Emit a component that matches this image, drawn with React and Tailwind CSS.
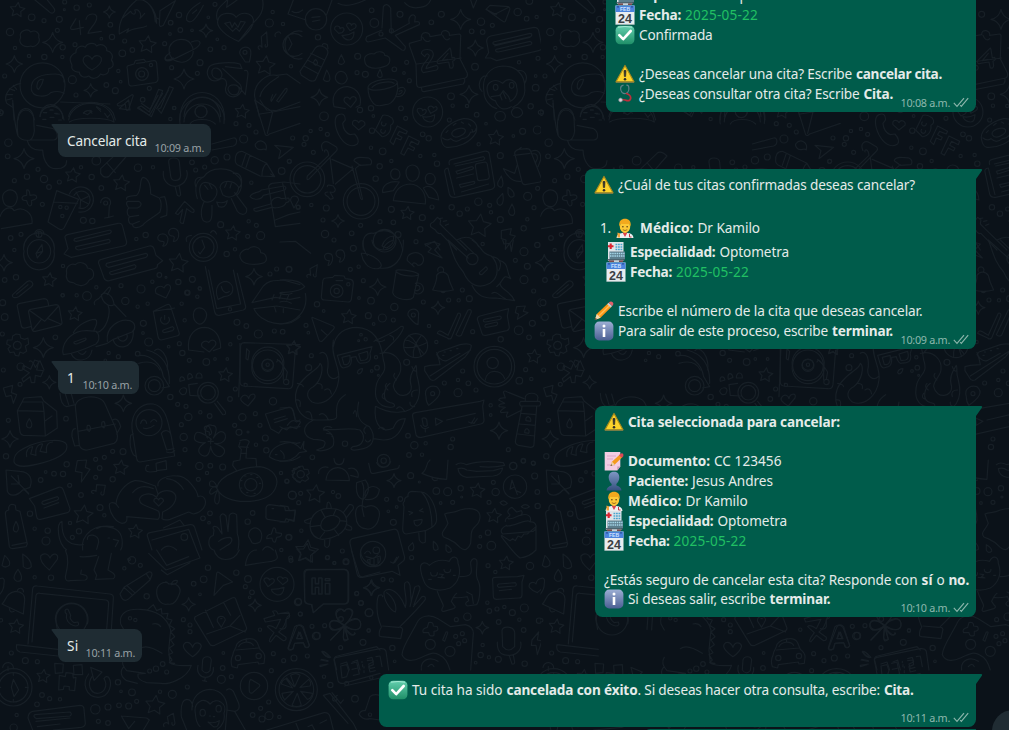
import React, { useLayoutEffect, useRef } from "react";

/* ---------- wallpaper ---------- */

const starPath = (x, y, r) => {
  let d = "";
  for (let i = 0; i < 10; i++) {
    const a = (Math.PI / 5) * i - Math.PI / 2 + 0.12;
    const k = i % 2 ? r * 0.5 : r;
    d += `${i ? "L" : "M"}${(x + k * Math.cos(a)).toFixed(1)} ${(y + k * Math.sin(a)).toFixed(1)}`;
  }
  return d + "Z";
};
const sparkPath = (x, y, r) => {
  const q = r * 0.18;
  return `M${x} ${y - r}Q${x + q} ${y - q} ${x + r} ${y}Q${x + q} ${y + q} ${x} ${y + r}Q${x - q} ${y + q} ${x - r} ${y}Q${x - q} ${y - q} ${x} ${y - r}Z`;
};

// Each group is drawn at three times its size, from its own origin.
const DOODLES = [
  {
    at: [0, 0],
    stars: [[52, 30, 23], [442, 134, 27], [796, 197, 30]],
    sparks: [[158, 127, 30], [43, 192, 25], [328, 36, 18], [618, 92, 20], [552, 237, 30], [272, 271, 20]],
    dots: [[95, 52, 10], [132, 62, 6], [178, 58, 9], [172, 91, 6], [230, 23, 8], [268, 15, 6], [194, 6, 6], [193, 29, 3], [30, 96, 11], [45, 144, 5], [87, 168, 5], [133, 171, 8], [188, 142, 8], [187, 171, 5], [225, 134, 6], [304, 116, 4], [336, 111, 8], [331, 74, 7], [374, 123, 6], [397, 150, 7], [367, 160, 10], [494, 131, 6], [510, 102, 4], [512, 68, 7], [537, 45, 8], [541, 90, 7], [576, 91, 4], [625, 52, 4], [652, 118, 4], [645, 13, 6], [631, 148, 7], [672, 143, 6], [600, 188, 9], [592, 220, 6], [515, 203, 6], [355, 213, 5], [217, 239, 12], [228, 285, 6], [319, 255, 7], [346, 272, 9], [362, 245, 4], [448, 265, 6], [428, 299, 7], [14, 228, 6], [0, 338, 9], [522, 324, 5], [808, 69, 12], [818, 36, 5], [849, 72, 5], [873, 199, 5], [735, 157, 6], [425, 222, 9], [603, 335, 18]],
    paths: [
      "M62 112C54 92 84 84 92 96C106 88 120 98 116 112C124 128 104 144 92 138C78 144 52 134 62 112Z",
      "M105 0L146 34C158 46 170 34 160 22L142 0",
      "M212 82L228 56M212 82Q210 90 222 88L250 82M238 62L242 104M258 58C262 38 294 36 290 56C286 76 268 84 264 100L304 94",
      "M212 186C206 170 220 160 228 158C226 142 244 134 256 142C262 128 284 126 290 138C306 128 322 140 320 152C334 154 342 168 334 180C344 192 340 204 326 206C328 222 312 228 302 222C292 238 274 238 266 228C252 236 238 228 238 216C222 218 212 206 216 196Z",
      "M276 210C256 200 244 184 252 172C260 162 272 168 276 178C282 164 298 164 304 174C308 190 290 202 276 210Z",
      "M382 206Q378 198 388 196L402 192L406 182L432 178L438 186L460 182Q468 180 470 190L474 236Q474 246 464 248L396 258Q386 258 386 248ZM410 190L434 187",
      "M426 203A19 19 0 1 1 425.900 203M453 190A5 5 0 1 1 452.900 190",
      "M358 102C354 66 376 28 410 0M358 102L386 86L380 98C400 80 420 88 440 78M410 0C440 -8 470 30 470 70M428 0C454 10 466 40 466 66M370 52L392 34C400 50 410 40 404 30C416 26 426 40 420 56L434 40",
      "M480 32L526 2L490 76Q478 84 478 72ZM470 54L478 58",
      "M560 60C556 38 580 20 600 8M560 60C572 74 586 62 610 16M578 40L590 30",
      "M508 142C520 112 566 108 578 142C586 172 560 190 540 186C516 184 504 164 508 142ZM510 158C484 176 494 190 520 178L582 148C610 130 604 116 574 126M500 166C490 180 500 184 520 174",
      "M652 60C640 20 680 10 684 -6M788 0C796 50 760 60 746 86L716 124C680 110 646 82 654 60C660 34 700 36 708 52C724 34 754 36 760 58C764 84 732 108 716 124M684 -6L680 22L700 8L722 -8",
      "M674 70L690 66L696 82L704 68L714 82L722 64L736 66L718 94L708 84L698 94Z",
      "M778 148C768 140 782 132 786 142L784 110L800 96L802 130C806 142 792 146 796 134",
      "M736 186L720 162C714 140 748 134 752 152Q754 164 748 186Z",
      "M906 110A34 34 0 1 0 906 160M906 94A42 42 0 1 0 906 176M826 110C820 98 838 92 842 100M866 112L876 132L866 150",
      "M60 256A67 67 0 1 0 195 256A67 67 0 1 0 60 256ZM94 268C90 230 130 222 166 222Q194 222 192 246M94 268C98 294 140 292 152 278Q176 270 192 280M112 250Q116 236 130 238Q128 252 116 268Q108 266 112 250Z",
      "M62 250C30 256 8 286 20 310L38 322M20 300L36 296M18 284L38 284M28 266L44 272M40 256L50 268",
      "M38 300L42 360M182 306L330 312M54 360C56 320 96 320 104 360",
      "M120 350C124 300 182 300 192 360M206 350C214 300 310 290 340 340L346 360M250 340C256 330 270 328 276 340M290 322L302 334",
      "M132 338h8M150 330h8M164 340h8",
      "M352 312L396 284Q402 284 398 292L386 328Q380 336 378 326L376 312L360 318Q350 318 352 312Z",
      "M414 322L424 318L448 336L476 268L488 272L454 350ZM474 328L482 324L508 260L520 264L484 340Z",
      "M540 360C536 250 676 250 674 360M552 350C556 272 658 272 662 350",
      "M628 200C640 186 700 186 720 192L726 206L676 200M628 200C612 226 632 250 656 240C672 230 680 240 680 254C668 280 690 296 710 288C730 276 728 256 712 246L668 206M734 212Q744 208 744 222L736 284L718 262M636 212C642 196 664 206 666 224C666 246 632 240 636 212ZM684 268C684 250 716 250 718 268C716 290 690 290 684 268Z",
      "M764 290C760 250 800 220 830 226L860 222L900 250M764 290L778 350M780 290C784 260 820 240 836 230M780 300L800 330L830 332L900 306M818 284Q810 300 814 304L828 282M830 302L856 266Q864 262 860 274L836 306Z",
    ],
  },
  {
    at: [0, 100],
    stars: [[726, 35, 22], [218, 226, 23], [364, 250, 25], [698, 400, 23], [535, 490, 30], [148, 540, 22]],
    sparks: [[72, 176, 30], [12, 488, 25], [762, 530, 25]],
    dots: [[603, 35, 18], [523, 24, 5], [511, 57, 5], [708, 71, 6], [747, 76, 6], [768, 96, 6], [731, 117, 12], [25, 128, 11], [23, 169, 7], [5, 37, 5], [81, 230, 8], [43, 242, 6], [132, 237, 11], [114, 208, 6], [178, 246, 6], [147, 261, 7], [127, 313, 6], [243, 202, 5], [275, 231, 8], [289, 182, 13], [304, 264, 7], [317, 309, 6], [250, 361, 9], [277, 363, 8], [414, 203, 11], [459, 202, 5], [576, 187, 7], [587, 210, 6], [614, 201, 6], [644, 181, 11], [681, 171, 9], [845, 213, 10], [868, 184, 6], [754, 248, 5], [894, 322, 6], [746, 364, 5], [769, 376, 6], [662, 374, 9], [782, 407, 12], [743, 409, 6], [705, 448, 5], [680, 462, 8], [437, 405, 8], [409, 417, 5], [32, 414, 7], [63, 403, 6], [43, 450, 5], [48, 532, 8], [14, 540, 7], [189, 498, 5], [188, 586, 5], [478, 525, 7], [498, 532, 3], [457, 545, 5], [535, 546, 8], [577, 538, 9], [867, 508, 8], [830, 507, 6], [810, 522, 6], [600, 566, 5], [562, 578, 6], [117, 403, 9], [181, 321, 5], [200, 323, 5], [187, 348, 5]],
    paths: [
      "M38 10C44 50 44 80 54 108Q66 124 90 120L160 120C176 120 176 96 160 86L110 76M54 108C48 60 54 30 74 26C100 24 102 50 102 76C106 100 98 116 90 120M82 122C88 150 110 152 128 150C130 190 150 208 170 206C190 206 200 196 200 182",
      "M120 50A34 34 0 1 1 188 56M206 60C210 30 240 10 270 10C310 10 336 30 342 66M208 66C230 50 320 52 342 66M130 38h10M150 30h10M168 42h10M128 58h10M150 52h12M176 60h8",
      "M250 38Q268 26 276 34L262 44ZM290 20l12 8M314 40l10 14M330 44l-8 8",
      "M540 72A67 67 0 1 1 672 70M552 66A54 54 0 1 1 660 66M570 72C580 54 630 54 646 72",
      "M412 24L448 46L488 -20M424 10L450 28L474 -14M470 26L506 -30M358 26L386 0L390 30Z",
      "M636 132L700 114C714 112 712 134 700 138L636 150",
      "M764 0L796 104Q800 110 808 102L900 70M780 42L818 36L900 20M764 0L818 36L802 100",
      "M766 132C780 114 804 126 798 150C792 142 782 154 772 146Q764 140 766 132ZM824 136L880 142L836 176L842 152Z",
      "M302 206L350 160Q362 150 380 168L326 230Q312 236 302 220ZM320 188L346 218",
      "M706 184Q704 154 726 154L800 190L824 230L780 228L712 194Q706 190 706 184ZM738 160L726 196M750 166L738 202M800 190C788 200 786 212 786 226M812 222L824 230",
      "M506 186C504 170 536 170 538 186L542 226C540 246 514 246 512 228ZM490 214C486 250 516 262 532 258C556 252 566 230 560 212M526 262L532 286Q540 292 542 284L538 260",
      "M592 296C582 264 590 240 612 230C630 200 690 198 712 228C730 240 728 270 710 286M602 290C592 250 610 240 634 252C650 260 660 276 640 300C624 312 606 306 602 290ZM660 262C664 236 704 240 716 262C714 286 690 300 668 284ZM614 256l10 12M628 252l8 14M680 248l-6 14M694 250l-4 14M612 306C600 330 600 368 622 366C638 366 636 340 636 316M704 278L740 326C742 346 724 348 712 334L694 296M650 306Q668 312 682 302Q678 326 656 320ZM588 262C580 240 590 230 606 232M718 262C732 246 724 216 700 220",
      "M750 290C756 274 780 280 784 270L852 258Q862 262 854 270L790 286C784 302 758 300 750 290ZM762 326L812 312C816 290 836 290 844 296L866 294Q872 306 858 308C852 326 820 324 816 322L770 334Q760 334 762 326Z",
      "M10 304C0 274 30 262 46 276C58 290 50 316 34 320C20 320 12 314 10 304ZM0 350C10 320 36 318 42 332C70 316 100 340 96 370L4 386",
      "M80 270Q88 266 90 286Q110 282 110 292Q110 298 94 302Q98 318 88 318Q82 314 80 302Q66 302 66 294Q68 286 80 286Z",
      "M170 272L236 298L192 384Q186 392 176 386L144 366ZM160 306L232 310M208 282A38 38 0 1 1 236 336M222 286A26 26 0 1 1 236 324M242 300L228 276M242 300L264 290M242 300L266 312M242 300L240 324",
      "M302 308A15 15 0 1 1 328 318L326 352L340 348M314 354L326 352",
      "M380 298C376 288 396 288 410 286C428 270 416 234 430 232C448 236 452 264 452 282L478 294Q488 310 480 336C462 352 440 360 428 376C414 386 396 386 398 372C384 374 382 352 392 350C378 348 380 326 388 324C380 320 376 306 384 304L416 304C428 310 424 320 412 324L390 324M392 350L416 346M398 372L418 364M482 292L494 290Q504 316 500 346L482 352",
      "M526 340L554 304L582 330Q584 340 574 336L560 326L550 370Q542 372 540 364L548 328L534 344Z",
      "M806 260Q806 254 816 250L852 246L900 252M806 260L826 380L900 370M848 250L858 300M826 360L866 344L900 336M872 302C870 284 894 284 896 300L882 324Z",
      "M196 416Q192 408 202 404L354 370Q366 368 368 380L380 426Q380 436 370 438L214 472L192 462L204 446ZM224 416L330 390Q338 394 330 400L230 424Q218 424 224 416ZM228 440L326 418Q334 422 328 428L236 450Q224 448 228 440Z",
      "M296 490Q294 480 304 478L448 438Q458 436 462 446L468 466L488 482L472 494Q474 504 464 506L328 542Q316 544 312 534ZM320 490L438 460Q448 464 438 472L326 502Q314 498 320 490ZM330 516L404 494Q412 498 404 506L336 524Q326 522 330 516Z",
      "M474 418C468 400 500 394 504 416C504 432 496 440 488 438C494 430 494 424 488 424Q478 426 474 418ZM506 400C504 382 532 378 536 400C538 416 528 426 520 424C524 414 524 408 518 408Q508 408 506 400Z",
      "M568 442A42 42 0 1 1 652 442A42 42 0 1 1 568 442ZM578 442A32 32 0 1 1 642 442A32 32 0 1 1 578 442ZM560 424Q554 408 574 406M632 398Q640 384 650 402M606 420L614 442L600 462L596 456",
      "M722 476C712 456 738 446 744 448C758 434 782 440 782 458C802 460 806 486 786 490C762 496 728 494 722 476Z",
      "M72 454A46 46 0 1 1 162 454A46 46 0 1 1 72 454ZM82 454A35 35 0 1 1 152 454A35 35 0 1 1 82 454ZM104 402A14 14 0 1 1 132 404M116 394V412M108 460L126 434L128 454L112 474ZM108 460L128 454",
      "M200 518C196 500 214 488 226 494C240 480 262 492 262 504C286 506 286 534 268 540C256 562 234 560 220 548C202 548 196 534 200 518Z",
    ],
  },
  {
    at: [0, 280],
    stars: [[225, 102, 22], [880, 205, 22]],
    sparks: [[130, 203, 30]],
    dots: [[188, 46, 5], [230, 46, 5], [261, 48, 13], [289, 22, 5], [363, 17, 6], [376, 63, 11], [423, 27, 12], [443, 71, 5], [413, 80, 5], [430, 130, 9], [429, 159, 4], [446, 186, 12], [545, 71, 5], [562, 38, 8], [592, 50, 5], [599, 25, 5], [554, 121, 5], [538, 191, 6], [506, 200, 4], [547, 219, 8], [568, 241, 6], [619, 246, 10], [645, 237, 4], [682, 237, 4], [691, 193, 5], [718, 172, 6], [711, 127, 9], [739, 138, 7], [775, 162, 12], [823, 153, 6], [848, 155, 7], [166, 172, 7], [8, 68, 9], [14, 111, 10], [7, 162, 6], [326, 219, 5], [355, 230, 6], [413, 221, 7], [316, 241, 4], [690, 88, 5], [803, 256, 46], [803, 256, 18]],
    paths: [
      "M38 44L80 6C94 -4 104 12 94 20L56 50C44 56 34 52 38 44ZM50 42L84 14",
      "M52 80Q50 72 60 70L132 56Q142 56 144 66L146 76M52 80L64 138Q66 146 76 144L92 140M86 98Q84 90 92 88L168 74Q176 74 178 82L186 128Q186 134 178 136L106 154Q98 156 96 148ZM90 92L134 124L176 78M98 150L124 118M182 132L144 116",
      "M48 162L60 164L62 174L74 178L84 174L86 192L76 198L80 214L70 220L60 216L56 228L46 226L42 216L30 218L24 206L32 198L20 192L22 180L36 180L38 168ZM52 184A12 12 0 1 1 51.900 184",
      "M188 214C190 180 220 150 262 152L290 154C302 170 296 186 288 192C262 204 220 222 190 224ZM220 158C232 136 264 118 286 118Q296 124 282 150M222 186L256 174Q262 176 254 182L230 192Q220 192 222 186ZM214 222C224 250 270 246 276 210M236 218Q250 230 258 214",
      "M290 158C320 150 334 100 324 76M284 74Q278 64 296 56L326 22Q334 20 330 30L322 44M304 44C320 30 340 50 342 74C330 82 306 70 304 44ZM342 72L378 110M322 184C316 140 360 114 390 122C410 130 406 150 396 156L340 178L322 190L288 200M340 180C346 212 402 210 400 154M354 170A14 14 0 1 0 380 162",
      "M460 94L500 74Q508 70 512 80L538 160Q538 168 530 168L484 180Q476 180 474 170ZM460 94L524 84M484 112A13 13 0 1 0 506 112M494 106V118M490 150L518 140Q526 144 518 152L494 158Q484 156 490 150Z",
      "M580 104C580 76 616 78 620 104C618 128 600 138 590 128Q580 120 580 104ZM566 210C560 160 590 142 614 142C646 144 662 170 662 204L640 212M566 210L612 216M628 216L606 200C600 184 620 180 626 188C636 172 652 184 646 196Z",
      "M616 -40L644 96Q648 108 658 106L730 90Q740 86 736 76L712 -20M626 -30L650 86L722 72L700 -30M654 58C640 20 660 4 680 4C706 12 706 48 672 50ZM664 20C668 38 680 42 688 34M690 80h4",
      "M756 68L790 18C810 -4 830 4 850 0L900 14M756 68L826 52L870 58L900 52M762 86L830 78L900 90M762 86C780 130 860 150 900 110M816 60l6-16M838 56l8-20M860 60l6-14M824 82l4 14M850 86l0 12",
      "M722 196Q724 188 734 188L900 194M722 196L716 350M740 206L748 214L744 240L738 236ZM832 238L850 256V300",
      "M464 212Q474 200 490 218C504 236 504 260 502 270M416 250C450 240 470 250 480 270M88 244Q96 238 106 262L120 242L132 270",
      "M468 40C460 20 484 14 492 24C500 6 516 14 510 30L498 54Z",
    ],
  },
  {
    at: [0, 350],
    stars: [[676, 75, 22], [362, 353, 23], [250, 495, 30], [406, 545, 22]],
    sparks: [[148, 97, 20], [370, 160, 25], [30, 267, 25]],
    dots: [[62, 50, 11], [10, 60, 6], [60, 103, 6], [25, 211, 6], [198, 206, 7], [511, 141, 8], [533, 163, 6], [558, 169, 6], [565, 201, 11], [601, 187, 5], [544, 224, 6], [551, 261, 11], [629, 198, 7], [555, 299, 6], [538, 342, 5], [706, 117, 6], [690, 147, 7], [766, 191, 6], [819, 154, 11], [727, 202, 11], [780, 226, 6], [704, 226, 6], [717, 247, 9], [744, 246, 3], [796, 264, 9], [799, 301, 8], [768, 284, 5], [18, 319, 8], [338, 304, 6], [369, 305, 9], [313, 322, 6], [287, 328, 6], [200, 343, 8], [137, 366, 4], [162, 371, 7], [189, 372, 8], [122, 390, 7], [287, 382, 6], [299, 354, 7], [338, 388, 8], [209, 406, 6], [243, 435, 7], [300, 473, 9], [313, 496, 5], [90, 491, 8], [104, 536, 5], [143, 542, 8], [138, 573, 12], [210, 519, 5], [237, 544, 8], [217, 562, 6], [598, 348, 11], [631, 347, 7], [621, 369, 5], [668, 351, 9], [595, 388, 6], [609, 505, 7], [630, 490, 7], [627, 518, 4], [743, 515, 8], [758, 489, 7], [843, 369, 5], [860, 393, 6], [877, 435, 12], [866, 562, 8], [737, 105, 5], [803, 44, 17], [803, 44, 5], [463, 107, 28], [463, 107, 18], [447, 218, 39], [624, 128, 31], [624, 128, 22], [553, 561, 10]],
    paths: [
      "M70 46L92 58L104 30L116 34L110 60L130 62L122 80L106 76L104 98L94 98L90 80L70 96L66 86L88 68L68 56Z",
      "M10 114L38 106L34 128L50 134L40 160L34 136L18 140Z",
      "M52 182L66 156L72 144L124 140L132 154L170 184L172 234L136 258L70 256Q62 254 60 246ZM52 182L132 184L136 258M66 156L128 156L132 184M136 212L156 198M88 206Q102 226 90 234Q74 232 82 216Z",
      "M226 170C226 136 300 130 314 160L344 228C358 260 352 276 342 280L262 300Q244 302 238 286ZM234 244L346 222M226 236Q214 236 216 260L224 288L238 286M338 210Q354 200 362 230L350 252M262 226Q258 240 268 244Q276 236 268 226ZM306 216Q302 230 312 234Q318 224 312 214ZM180 130Q182 166 200 170L226 164M196 132L206 164M214 132L222 160",
      "M396 236C392 180 430 158 460 162C500 170 504 220 514 260L524 318L420 336Q412 336 410 326ZM422 220C426 204 438 208 440 220M452 216Q462 202 470 214M430 234Q446 240 462 226M392 256Q386 290 400 314L410 320M392 256L400 252M484 250C492 236 512 240 514 260M484 250L500 300L522 296M500 306Q512 312 524 302M440 346Q430 366 450 366L470 364L468 340L498 332L500 358L470 362M446 346L440 346",
      "M420 16C450 14 484 40 490 80L508 110L486 114M440 0C480 10 510 40 508 100M566 104L592 100M566 104L570 136L600 138M644 160L668 194Q680 196 676 184L652 154M540 94C536 78 552 76 554 90ZM564 88C560 66 574 66 578 82ZM588 84C588 62 608 66 606 84ZM538 124C544 108 570 110 556 132Q544 138 538 124Z",
      "M720 -20V96Q720 106 730 108L862 116Q876 118 878 104L886 0M756 46A48 48 0 1 0 851 46A48 48 0 1 0 756 46M830 36Q834 26 842 36L862 66L858 88M858 88A8 8 0 1 0 859 104A8 8 0 1 0 858 88M732 100h6",
      "M744 168Q716 152 724 142C732 130 744 136 746 146C750 128 770 128 764 144Z",
      "M796 192L866 172Q876 170 880 182L886 210M796 192L812 236L836 250L846 236L900 230M822 208L856 198M824 218L862 206M862 226Q876 204 890 216L900 210",
      "M808 320C812 290 860 270 890 280L900 278M808 320C830 336 870 340 900 320M842 302Q856 312 852 326M826 314h5",
      "M42 336C40 310 60 300 90 286C130 270 190 264 200 284C206 306 180 324 130 338C86 350 50 356 42 336ZM80 320C76 300 88 290 98 290L92 312L108 316C104 290 118 280 128 282L120 304L140 308C136 284 146 276 158 276",
      "M18 360L60 364C92 366 98 390 90 412L68 420C50 440 28 440 22 424ZM34 378L86 430M54 376L58 400M34 402L58 402M74 420L86 432",
      "M232 332L260 330L256 352L270 358L244 396L246 368L226 364Z",
      "M280 430C268 428 276 416 288 424L290 404L316 406L312 428C314 438 298 438 304 426",
      "M88 446L176 412Q186 410 190 420L210 476Q210 484 202 488L122 508Q112 510 110 500L104 468ZM128 454L172 440Q180 444 172 450L132 464Q122 460 128 454ZM132 474L176 458",
      "M328 468C326 456 340 456 348 462C350 430 376 400 404 392C428 390 450 404 466 408L474 432L470 442C452 426 424 430 418 448C420 470 450 468 476 484Q482 500 474 508L380 500Q384 520 366 520C346 516 330 490 328 468ZM348 462L356 472M398 428Q420 400 460 416M470 442C474 424 498 418 514 424C540 436 526 470 488 486L486 506Q494 512 510 508L566 486L580 492C610 486 622 462 614 446Q606 434 594 440C592 420 560 376 530 378C500 374 470 390 474 408M500 386C530 388 546 410 550 418M476 468L462 454C460 442 474 444 476 450C480 440 492 446 490 454Z",
      "M628 246C604 240 612 222 628 230C634 244 640 250 628 256ZM634 268C610 250 590 240 586 252C576 274 594 280 616 278C594 290 590 306 606 316C624 326 630 304 632 288C636 318 662 330 672 310C680 296 660 286 644 280C668 284 682 268 674 250C662 236 646 254 640 264C650 244 654 226 636 226C618 220 610 244 622 264M624 274h16M632 266v16",
      "M720 272Q742 264 748 276L740 292L738 324L768 326L770 350M720 276L716 290L724 298L720 330L700 334L698 346L710 362M718 290L744 292M722 310L740 310M650 414C660 370 740 350 780 350C820 356 838 384 828 410C816 448 770 456 720 454C690 450 660 440 650 414ZM718 404A35 35 0 1 0 788 404A35 35 0 1 0 718 404ZM734 404A18 18 0 1 0 771 404A18 18 0 1 0 734 404ZM650 412L630 408C624 390 640 386 650 408C624 414 626 436 636 432L654 420C640 440 642 462 652 462Q662 456 656 424M722 392h4M734 378h4M752 374h4M770 382h4M778 400h4M722 414h4M740 428h4M762 430h4",
      "M798 474Q800 464 810 464L854 470L856 482L886 482L882 514L858 506L854 516L804 508Q796 506 798 498ZM816 476h5M900 352L880 356L884 370L876 374L882 386L890 392L900 396",
      "M26 472Q30 458 46 466L48 480L60 484L82 582L78 590L38 596Q30 596 28 590L16 490Q16 482 26 480ZM36 586L78 578M48 514Q62 536 50 546Q36 546 42 528Z",
      "M186 514C168 520 172 580 200 600M186 514C184 560 200 590 250 584M248 600C240 550 290 520 330 532C360 536 370 560 366 590L362 600M262 568C260 548 296 552 296 576L290 598M324 564h5M340 568L356 572L346 590M290 536Q310 524 340 530",
      "M442 558Q440 550 450 548L570 524Q580 522 584 532L606 600M442 558L456 600M456 570L566 538L590 600M490 534L540 510L552 526M484 600C500 580 520 590 530 600",
      "M640 556C624 560 620 590 640 600M640 556L642 540C632 526 650 526 656 536L666 552M666 550L660 500Q666 484 678 498L684 544L688 496Q696 484 710 494L712 552C720 570 716 590 714 600M656 574Q670 562 690 562C700 566 696 580 682 586L660 600",
      "M746 560C744 536 764 530 774 536C790 546 786 566 780 576Q766 584 756 578ZM820 534Q828 532 828 548L844 550Q848 560 830 562L826 576Q818 578 816 564L800 566Q800 554 814 552ZM788 600Q800 580 820 600",
    ],
  },
  {
    at: [0, 550],
    stars: [[48, 230, 23], [130, 379, 21], [465, 466, 30], [918, 10, 30]],
    sparks: [[566, 163, 20], [765, 166, 19], [1115, 113, 24]],
    dots: [[104, 82, 5], [153, 83, 8], [387, 28, 4], [421, 46, 6], [373, 55, 5], [396, 31, 11], [440, 139, 8], [624, 53, 8], [611, 88, 10], [581, 101, 7], [600, 133, 4], [709, 68, 8], [744, 87, 10], [736, 110, 6], [756, 127, 7], [749, 142, 4], [895, 155, 9], [983, 22, 6], [1003, 39, 4], [873, 31, 6], [1038, 36, 7], [1070, 131, 6], [1083, 159, 7], [1107, 188, 11], [901, 192, 6], [1023, 207, 7], [1106, 241, 5], [951, 257, 10], [780, 239, 5], [550, 209, 6], [570, 225, 6], [570, 245, 6], [670, 309, 4], [820, 311, 6], [882, 324, 9], [851, 332, 6], [922, 318, 6], [814, 362, 6], [668, 354, 7], [664, 388, 12], [694, 380, 6], [562, 411, 6], [517, 433, 12], [480, 425, 5], [354, 397, 8], [396, 427, 10], [363, 424, 4], [410, 454, 6], [386, 468, 9], [357, 466, 7], [324, 471, 9], [286, 478, 14], [295, 514, 6], [324, 519, 7], [180, 448, 5], [149, 446, 6], [126, 435, 7], [111, 463, 7], [50, 495, 5], [41, 533, 11], [76, 332, 9], [34, 309, 6], [112, 335, 6], [3, 211, 5], [806, 456, 6], [782, 475, 6], [758, 495, 7], [786, 507, 9], [807, 497, 12], [838, 501, 5], [972, 380, 5], [991, 405, 8], [1004, 447, 6], [1065, 446, 10], [1110, 494, 5], [1114, 383, 5], [1040, 400, 6], [390, 205, 5], [406, 210, 5], [468, 356, 8], [488, 342, 7], [500, 366, 6], [449, 363, 6], [831, 103, 51], [215, 208, 47], [762, 408, 41], [889, 419, 63], [889, 419, 52], [40, 412, 56], [40, 412, 44]],
    paths: [
      "M14 16Q34 34 28 46Q16 56 6 46ZM68 12Q96 30 94 50Q84 62 70 50ZM54 58Q70 80 62 92Q46 98 42 84Q42 74 54 58ZM148 60Q118 36 122 18C132 6 146 12 150 24C158 6 178 10 172 28Z",
      "M196 0C210 30 200 60 196 80Q196 96 210 92L256 90Q266 84 258 76L242 72L244 60M296 20L282 60L290 76L286 88L340 86Q350 78 338 68L324 60L334 10M240 20Q260 22 290 16",
      "M446 10L498 60L600 24L590 0M470 0L500 46L566 20M484 60L502 74L570 38M642 0C650 36 700 40 718 0M736 46C740 20 750 0 770 0M736 46L800 36Q834 34 832 20L826 0M1054 0L1076 70Q1078 82 1090 80L1140 66M1082 0C1080 30 1110 50 1140 46M1098 20L1120 26L1134 14",
      "M6 162C20 150 16 130 46 124Q76 126 74 150L70 192ZM52 122A9 9 0 1 1 70 126M28 176Q30 190 42 184M0 86Q16 80 12 100Q12 120 0 132",
      "M84 282L98 116Q100 106 112 108L330 132Q342 134 340 146L334 240M96 276L108 136Q110 128 120 130L318 150Q326 152 326 160L320 238M50 284L174 298M50 284Q46 302 60 306L174 318M172 238L166 206A49 49 0 1 1 262 222M200 192C192 186 194 176 204 178L212 196Q206 206 222 218L234 216Q240 228 226 228C204 224 196 206 200 192Z",
      "M362 222C356 190 380 176 420 178C470 180 500 200 512 240L506 300L510 340Q530 350 574 346C560 390 500 404 484 400L440 398Q410 390 414 372L436 370L380 362Q360 340 372 322M362 222L372 240M444 178L460 164L470 182M470 182L484 176L486 192L504 190L500 206L516 210L508 226L524 236L512 246L524 260L512 270L522 284L508 294L518 308L506 314L516 330L508 338L524 340M458 222Q474 218 482 230M420 296Q440 280 486 310M372 350C360 360 360 380 380 392L412 400",
      "M360 132L372 112L446 66Q456 64 456 74L450 90L384 148Q372 156 364 142ZM372 112L396 134M380 106L404 128M438 70L450 88",
      "M470 130C468 98 496 92 508 102C530 96 546 114 538 132C530 156 520 166 504 162C486 168 472 150 470 130ZM506 102Q500 94 496 96M514 102Q520 88 532 92Q534 102 514 104M642 136L650 70Q652 64 658 68L698 96L670 106Z",
      "M792 92C790 80 808 82 808 90C818 80 828 90 820 98L804 110ZM832 88C832 76 848 80 848 86C858 78 866 86 862 94L848 104ZM814 118Q836 118 852 112Q850 138 830 134Q816 128 814 118Z",
      "M914 74Q914 60 926 60L1032 58Q1044 60 1044 72V148Q1044 162 1032 162H970L940 188L936 164L926 162Q914 160 914 148ZM936 84H946V100H956V84H966V132H956V112H946V132H936ZM976 100H988V132H976ZM976 86H988V92H976Z",
      "M584 208Q582 200 590 198L696 144Q706 140 708 150L740 234Q740 242 732 244L644 286Q632 290 628 280ZM616 180L640 232M672 160L692 196M620 252L690 228L720 196M690 228L736 246M652 214C648 196 674 194 676 210L664 232ZM662 206h4",
      "M792 206L824 196L818 184Q830 178 834 192L864 186Q874 194 862 200L856 218Q850 236 836 246L858 262Q860 272 850 272L828 256L812 276Q804 276 812 262L822 248L802 230Q808 222 828 236L842 208L796 216Z",
      "M864 296L890 230Q900 220 910 230L928 286Q926 296 916 290L910 278L884 280L878 298Q868 304 864 296ZM900 246L890 266H908Z",
      "M1034 226C1010 214 1000 190 1018 180Q1026 174 1034 184C1042 170 1062 176 1058 190C1054 204 1044 214 1034 226C1052 206 1080 200 1082 220C1086 244 1060 244 1034 226L1044 268Q1030 280 1030 262L1034 226L992 270M1034 226C1010 206 986 206 990 226C994 244 1014 242 1034 226M1034 226C1040 250 1060 266 1064 248",
      "M578 320C550 300 544 286 556 278C566 274 574 282 578 292C584 274 600 276 604 288C600 304 590 312 578 320ZM696 350Q690 330 698 316C700 300 706 298 708 290C712 268 760 256 772 278L780 298Q796 310 794 324L792 340L776 342L774 336L714 344L712 354ZM708 300L776 294M716 290C724 274 750 272 760 286M714 316A8 8 0 1 0 714 332A8 8 0 1 0 714 316M776 310A8 8 0 1 0 776 326A8 8 0 1 0 776 310M738 274L740 266",
      "M608 330C612 316 632 318 634 330L630 362Q618 376 606 360ZM594 346C588 370 604 382 616 382C632 382 642 370 640 352M616 382L614 392M608 392L620 394",
      "M1002 330Q1002 320 1012 318L1130 290L1140 300M1002 330L1014 392Q1018 402 1030 400L1140 370M1034 408L1140 384M1022 348L1040 344L1046 362L1040 380L1026 384ZM1054 340L1070 336L1078 372L1060 376M1056 358L1074 354M1088 344v6M1092 362v6M1102 332L1118 330L1120 344L1106 350L1110 366L1126 362M966 304Q974 302 986 320Q978 324 966 304ZM962 330L984 334M960 350L980 344",
      "M8 352A16 16 0 1 1 40 356M24 350v12M40 388L56 420L42 440L34 412ZM40 368v8M40 448v8M-4 412h6M76 412h8",
      "M164 340L190 342L188 368L166 370ZM220 346L246 344L248 374L222 374ZM178 376L196 380L198 368L218 370L220 384L228 382L224 422L208 420L208 410L192 408L190 418L176 420Z",
      "M266 372C244 400 258 440 294 442C330 442 338 400 326 382Q318 376 312 386C326 410 310 430 292 430C268 428 262 400 276 380M272 352L306 366L282 392Z",
      "M84 504Q84 488 98 484L240 466Q252 466 252 478L256 520Q256 530 244 532L160 540M84 504L98 540M104 494L210 486Q218 492 210 498L110 506Q98 500 104 494ZM108 514L210 504M112 530L180 522",
      "M364 498L440 504L448 510L430 540M364 498L386 536L404 514M492 530C486 520 500 514 506 522L502 500L520 490L524 514C528 528 514 530 516 518",
      "M544 500Q540 450 560 448Q576 448 578 470M544 500L560 540M576 480C574 440 600 420 630 418C668 420 686 450 680 490L676 540M586 490C580 456 610 440 630 462C650 440 684 460 672 490C676 510 666 530 652 538M586 490Q588 520 600 530M600 488A8 10 0 1 0 616 488A8 10 0 1 0 600 488M648 476A8 10 0 1 0 664 476A8 10 0 1 0 648 476M628 498h4M640 500h4M624 516Q640 522 658 512Q656 534 640 530ZM680 420Q690 412 700 424L716 460Q722 480 704 484L680 480M704 484L736 540",
      "M752 388Q746 392 748 424Q750 432 758 428L778 410Q782 406 776 402Z",
      "M884 410L872 376Q888 366 900 376ZM900 412L926 388Q936 398 930 408ZM902 424L938 430Q934 446 922 448ZM892 430L904 466Q890 474 876 466ZM880 424L854 450Q846 440 846 430ZM878 414L844 402Q846 390 858 386ZM882 410L860 384",
      "M970 436L990 430L1060 520L1070 540M970 436L1044 520M996 428L1022 460L1030 450M1006 440L1012 436M1078 494Q1080 480 1096 482L1110 440Q1120 430 1140 436M1078 494Q1090 512 1110 506L1140 510M800 540L972 488Q986 486 990 500L1000 540M888 520L896 540M924 530L936 524L944 540M960 520L980 510",
    ],
  },
  {
    at: [200, 0],
    stars: [[887, 414, 24], [622, 640, 21], [838, 678, 36]],
    sparks: [[782, 58, 30], [826, 144, 24], [807, 283, 27], [358, 292, 25], [414, 663, 19]],
    dots: [[354, 112, 8], [515, 31, 7], [523, 69, 13], [600, 43, 9], [543, 102, 6], [574, 92, 6], [694, 67, 7], [724, 43, 9], [843, 65, 11], [877, 76, 6], [815, 94, 7], [848, 96, 7], [953, 36, 11], [980, 56, 7], [1010, 51, 5], [988, 3, 10], [473, 169, 9], [471, 218, 6], [496, 223, 9], [583, 208, 7], [612, 219, 4], [620, 187, 6], [628, 242, 6], [825, 200, 10], [957, 187, 5], [1014, 175, 6], [1007, 263, 10], [1007, 228, 4], [992, 319, 8], [1021, 337, 6], [753, 289, 10], [758, 317, 5], [801, 318, 5], [830, 344, 7], [748, 360, 6], [858, 371, 4], [968, 394, 9], [940, 408, 4], [1012, 390, 12], [836, 433, 5], [480, 330, 8], [513, 325, 8], [603, 325, 7], [520, 348, 4], [617, 355, 6], [372, 349, 13], [332, 393, 5], [362, 387, 5], [317, 415, 8], [382, 403, 6], [278, 414, 6], [312, 433, 6], [340, 457, 6], [268, 484, 6], [516, 392, 8], [513, 443, 5], [548, 454, 10], [539, 499, 8], [574, 483, 5], [527, 536, 8], [668, 403, 7], [686, 415, 8], [661, 468, 5], [703, 465, 5], [711, 491, 8], [901, 467, 9], [835, 605, 11], [755, 622, 8], [802, 627, 6], [779, 641, 8], [873, 637, 5], [869, 616, 6], [901, 659, 9], [983, 589, 12], [1013, 565, 6], [1002, 623, 6], [971, 685, 8], [982, 658, 5], [334, 615, 5], [379, 624, 9], [295, 621, 6], [369, 660, 6], [375, 702, 11], [455, 700, 7], [402, 720, 6], [482, 676, 6], [540, 665, 6], [580, 667, 7], [574, 628, 9], [667, 653, 9], [661, 688, 8], [696, 621, 6], [648, 725, 6], [594, 704, 9], [848, 732, 5], [440, 87, 48], [683, 336, 45], [322, 538, 52], [322, 538, 41], [483, 604, 53], [483, 604, 42], [1049, 96, 10], [1064, 144, 5]],
    paths: [
      "M264 42L280 0M264 42L318 60M276 34Q290 44 308 30M316 58A32 32 0 1 1 380 58A32 32 0 1 1 316 58ZM336 52L360 50M338 64L360 60M380 44L396 0M414 10Q440 26 496 0M614 8Q630 28 660 22Q684 20 692 0M820 24L812 0M830 0L820 24",
      "M404 88C402 74 420 76 420 86C430 78 438 88 426 98L416 100ZM440 78C438 66 454 68 454 76C464 64 472 76 466 84L450 92ZM426 106Q444 108 462 96Q462 118 448 120Q434 120 426 106Z",
      "M652 334C648 320 668 324 668 332C676 322 684 332 674 342L662 348ZM684 326C686 314 700 318 700 324C710 314 716 326 706 332L692 340ZM668 350Q686 354 704 344Q704 366 690 366Q672 364 668 350Z",
      "M546 84L550 20Q560 6 572 24L574 100L628 70C622 50 640 36 646 50L644 66Q662 62 658 74L586 106L616 140Q616 154 606 150L556 114L504 126Q494 122 500 110L546 90",
      "M628 130L664 120Q662 98 676 98Q690 98 690 110L724 104Q724 90 738 92Q750 96 748 106L778 102Q784 104 782 112L780 176L802 220Q804 230 796 234L662 262Q652 264 650 254L648 192L628 136ZM650 192L784 174M664 262L666 272Q668 276 676 274L790 252Q796 246 794 236M668 112Q676 130 690 122M728 106Q736 126 748 116",
      "M664 160C666 144 700 144 700 164C698 182 680 190 678 206L710 196Q718 204 710 210L670 218Q662 212 666 202C672 184 688 178 688 166Q680 156 674 170ZM750 144L712 182Q710 194 720 190L746 186L750 204Q760 206 760 196L758 184Q770 178 762 172L756 174L752 148ZM744 160L726 182L744 178",
      "M858 28L870 16L926 20Q932 24 928 32L916 64Q912 68 906 62ZM858 28L890 44M926 22L882 44",
      "M860 124Q860 112 872 108L1002 82Q1014 82 1016 92L1026 140Q1026 150 1016 152L890 182L872 174L856 174L866 158ZM880 126L990 100Q1000 102 992 110L888 134Q876 134 880 126ZM888 148L990 124Q1000 128 992 134L896 156Q884 156 888 148ZM884 138L990 112",
      "M300 214L346 144Q356 132 374 142Q388 152 382 164L346 240Q340 246 330 242L304 226ZM322 180L362 200M332 160L374 180M312 198L352 220M366 138Q368 126 382 134L384 146M346 178Q358 188 348 196Q334 192 346 178M424 164Q412 186 416 190Q426 198 434 186ZM380 210Q394 232 388 242Q376 248 370 238ZM540 208Q548 224 546 230Q536 236 532 226Z",
      "M406 236C404 210 438 204 442 236Q436 252 424 252Q410 250 406 236ZM402 320C390 280 420 258 444 260C474 266 486 290 480 316L468 322M402 320L436 326M452 322L434 306C426 292 444 286 450 298C456 284 472 290 468 302Z",
      "M494 182C490 166 512 158 522 162C534 150 556 156 554 166C576 168 574 194 552 200C530 208 496 208 494 182Z",
      "M504 264C502 240 590 226 592 248C598 280 580 314 556 314Q530 322 520 310C508 296 504 280 504 264ZM504 264C520 280 590 262 592 248M594 266Q614 256 616 272Q610 292 590 290M598 274Q608 268 606 276Q602 284 594 282M516 262C530 246 570 242 582 250",
      "M416 344Q436 336 436 360L428 370C430 390 440 400 450 404L464 402Q480 420 472 432C450 446 430 430 416 404C402 376 402 350 416 344Z",
      "M476 390L458 374C454 358 472 358 476 368C482 356 498 364 494 376Z",
      "M526 390L548 346Q560 342 576 354Q586 368 572 376C574 396 560 412 546 410ZM546 366A7 7 0 1 0 558 370M544 388A7 7 0 1 0 556 392M570 424L592 378L622 394L618 402L598 394L592 404L606 412L602 420L588 414L580 434ZM602 460L626 408L658 424L654 434L634 424L628 436L644 444L640 452L624 444L612 466Z",
      "M724 420C716 390 756 364 790 356C822 354 836 376 828 398C810 430 770 444 740 442Q728 440 724 420ZM756 404C750 388 790 378 796 390C798 404 764 420 756 404ZM728 414Q740 424 752 416Q768 432 786 416Q806 414 812 396Q826 398 828 386M760 376l8-6M784 366l6 4M806 372l6 6M738 398l6-6M816 388l2 6",
      "M852 276C844 230 870 200 908 198C950 198 976 226 974 264C978 290 960 312 938 322M852 276C852 300 870 320 890 326M862 274C856 246 886 232 908 250C924 230 950 240 950 262C956 280 944 300 930 304M862 274C864 290 876 300 884 302M846 274C830 260 840 224 862 228M954 212C976 208 986 230 974 250M880 262A7 9 0 1 0 894 262A7 9 0 1 0 880 262M928 256A7 9 0 1 0 942 256A7 9 0 1 0 928 256M874 290L900 286L910 272L926 290L930 300M886 302Q900 340 934 320M900 284L906 300M910 278L918 296M884 350C886 330 912 330 916 346C918 366 890 370 884 350ZM934 336C940 316 966 320 968 340C960 356 938 358 934 336Z",
      "M368 452C358 430 374 420 388 428L408 440Q416 448 406 456L328 536Q318 544 322 528L386 466C384 446 372 446 374 456M390 472L400 550M396 478L460 506L406 552M456 498L482 596Q490 604 486 590L466 506L480 494M462 482C464 468 490 472 506 474Q520 482 512 494L480 496ZM382 560Q380 552 400 558L406 568Q406 580 390 576L400 594Q390 602 386 592L376 584Q372 576 384 576",
      "M572 524C570 500 600 502 600 524C598 544 574 542 572 524ZM618 520C616 488 656 486 658 518C656 552 620 552 618 520ZM676 538C674 514 704 514 706 538C702 560 678 558 676 538ZM548 578C544 556 570 540 598 546L580 572ZM580 602C584 570 600 554 630 552C660 554 680 578 676 612ZM670 564C690 550 714 570 716 600L686 592Z",
      "M748 494Q744 480 756 478L852 454Q866 452 868 462L884 556Q884 566 874 568L766 592Q752 594 748 582L734 516Q732 506 744 504L764 584M762 492L850 470Q858 474 850 480L766 498M826 498Q826 490 834 490L856 486Q862 488 862 494L868 530Q868 536 862 538L838 542Q832 542 832 534ZM768 514L816 500Q826 504 816 508L772 522ZM770 534L820 522M778 554L822 544Q828 548 820 552L782 562ZM784 576L866 552",
      "M944 460Q944 452 956 448L980 446Q990 446 992 454L1026 540L1020 546L976 554Q968 554 966 546ZM942 466L990 460M910 506L944 520L952 494M910 506C922 530 940 546 962 544M994 454C1014 444 1024 460 1022 480L1014 500M996 462Q1014 458 1012 476L1006 490M958 446L964 442M904 528Q914 556 904 562Q890 560 894 546ZM924 562Q944 572 942 588Q930 598 924 580ZM908 580Q914 612 900 616Q888 612 892 598ZM936 612Q950 636 940 646Q926 648 926 632Z",
      "M904 692L934 686L930 704L946 708L916 748L918 720L904 716Z",
      "M692 680Q688 670 700 666L712 652L722 660L720 672L740 692L800 750M692 680L706 690Q714 704 722 700L770 750M718 656l10-2M730 664l10-2M736 676l10-4M676 738L704 724L720 750M770 720C800 704 820 710 836 740",
      "M490 750C484 710 500 696 522 700C560 680 600 700 608 750M520 722A34 34 0 0 1 588 722A34 34 0 0 1 520 722M546 738Q556 710 580 708Q586 730 560 744Z",
    ],
  },
  {
    at: [280, 240],
    stars: [[206, 231, 23], [762, 350, 22], [40, 324, 22]],
    sparks: [[293, 141, 25], [792, 68, 26], [474, 203, 20], [657, 572, 26], [811, 597, 26]],
    dots: [[220, 25, 9], [27, 88, 9], [211, 88, 6], [236, 80, 5], [250, 122, 6], [237, 174, 4], [273, 182, 10], [343, 201, 11], [265, 227, 9], [307, 234, 12], [340, 240, 6], [281, 252, 4], [111, 193, 8], [131, 213, 4], [78, 256, 6], [85, 278, 4], [94, 347, 6], [86, 383, 9], [430, 186, 6], [447, 258, 5], [506, 180, 6], [536, 181, 5], [568, 176, 9], [547, 150, 6], [732, 35, 12], [772, 15, 8], [823, 29, 6], [706, 61, 6], [742, 79, 9], [732, 119, 12], [793, 119, 6], [828, 112, 8], [761, 153, 6], [785, 188, 12], [793, 231, 10], [757, 250, 9], [716, 271, 13], [747, 292, 7], [787, 283, 6], [662, 298, 8], [578, 275, 6], [469, 306, 5], [380, 367, 9], [493, 429, 6], [534, 420, 5], [548, 393, 6], [565, 430, 7], [588, 450, 6], [534, 458, 12], [718, 422, 10], [754, 417, 5], [737, 389, 6], [790, 390, 6], [842, 381, 11], [839, 434, 6], [632, 496, 5], [632, 525, 4], [805, 542, 6], [518, 597, 6], [512, 621, 8], [384, 587, 7], [403, 616, 11], [437, 610, 5], [426, 644, 5], [387, 645, 7], [97, 652, 7], [685, 629, 6], [699, 678, 11], [730, 662, 7], [760, 670, 6], [798, 649, 6], [392, 707, 9], [195, 611, 8], [257, 298, 5], [243, 284, 4], [236, 302, 3], [291, 383, 7], [275, 393, 4], [295, 406, 3], [288, 352, 5], [407, 317, 36], [643, 380, 61], [643, 380, 52], [638, 369, 17], [577, 57, 17], [170, 153, 19], [170, 153, 8], [458, 461, 6], [400, 225, 6], [833, 314, 17], [311, 662, 19], [311, 662, 8], [205, 133, 5]],
    paths: [
      "M134 52C130 36 158 36 158 54C158 70 148 78 144 76L148 62Q136 62 134 52ZM168 42C168 26 192 24 194 44C196 58 184 68 178 66L182 54Q170 52 168 42Z",
      "M244 40C262 38 300 56 304 76C300 92 270 88 258 72Q246 58 244 40ZM250 0C246 20 256 40 262 46M300 84C340 90 372 60 370 0M276 0C278 40 340 40 346 0M310 26Q314 10 340 0M382 62C378 40 408 32 424 44C436 56 430 76 414 76C406 66 396 66 398 76C408 86 400 78 382 62Z",
      "M434 12L460 6L480 12L464 30L486 54L444 36L454 26Z",
      "M82 112C76 104 88 100 92 106L90 86L112 74L108 104C112 114 98 112 100 102",
      "M128 128Q128 114 138 114L158 112L164 106L192 108L196 116L212 118Q220 120 220 130L214 178Q212 186 204 186L134 180Q124 180 124 170ZM168 122L188 122",
      "M348 94C344 84 400 92 416 102C416 112 360 110 348 94ZM348 96L338 158C344 180 390 184 400 172L416 104M406 130C430 124 436 150 424 158Q412 166 404 158M406 138Q420 132 420 146Q414 156 404 150",
      "M458 150Q472 120 470 106C478 92 496 94 504 106C508 126 512 134 520 150Q490 158 458 150ZM474 94A9 9 0 1 1 490 94M482 154Q490 162 496 154",
      "M504 0L564 54M540 0L582 40M504 0C520 40 520 60 550 96C568 140 600 146 630 130C660 110 656 70 634 48C600 40 606 16 576 0M598 98L618 80Q626 86 618 92L606 104Q598 104 598 98ZM576 136C590 166 610 176 648 174L704 182C690 150 660 150 660 130M656 60C690 70 676 90 692 116C664 100 676 120 650 140M636 160C650 150 660 170 676 176M634 50C660 52 668 70 656 92M668 0L672 12L690 10L694 34L700 0",
      "M96 236Q94 230 102 234L160 258Q166 262 160 268L126 304Q118 306 116 298ZM124 270L142 286",
      "M384 226C380 206 410 200 416 220L414 254Q400 250 384 226ZM472 280Q474 270 484 274L504 286L534 220Q542 218 542 226L514 294Q508 300 502 294ZM528 284L564 210Q574 206 574 216L544 286Q536 292 528 284Z",
      "M592 238Q592 230 600 228L686 206L682 228L688 262Q688 270 680 272L618 286Q608 288 606 280ZM612 238L660 228Q668 232 660 238L616 246Q606 246 612 238ZM616 254L650 246Q656 250 650 256L620 262Q612 262 616 254Z",
      "M710 200L736 198L730 214L744 218L712 238L716 222L706 218ZM818 158L864 124Q878 120 876 136L832 170Q818 172 818 158ZM830 160L864 136",
      "M832 204Q832 196 840 194L915 178M832 204L844 258Q848 266 856 264L872 260M864 216Q862 208 872 206L915 200M864 216L878 268Q880 276 888 274L915 268M868 212L915 240M882 268L900 240",
      "M160 300C150 350 182 380 176 420C170 470 130 500 96 486C76 470 80 450 100 440C126 420 132 380 120 370M160 320C166 280 196 262 230 262C280 264 304 300 310 360C324 400 300 400 290 430C280 470 290 500 330 502C350 502 346 490 330 488C300 478 316 440 330 430M282 304C310 290 340 280 362 260Q376 256 366 274C350 306 320 320 310 340M300 340C340 330 366 360 362 390C360 410 340 420 340 440C350 480 396 470 394 440C384 410 400 390 408 376C412 380 406 400 414 420C430 480 400 516 360 516C330 520 300 506 290 500L286 500C280 560 310 580 340 564C350 540 360 536 376 536C366 570 350 600 310 600L280 596M120 340C136 330 146 350 144 380C136 410 160 424 174 410M120 370C116 390 90 390 60 430C30 470 50 540 110 540C150 540 170 540 170 530M170 530C168 500 170 480 196 464M236 486C226 530 240 550 268 560C290 590 280 620 250 626C220 634 204 630 218 620C250 620 260 590 240 570C200 560 150 576 130 566C140 550 166 570 150 560M100 540C60 560 70 590 100 598C140 600 140 606 130 622L110 630C120 636 150 630 160 616C166 590 150 570 130 570M52 430Q68 432 70 440M46 480Q66 476 60 500M78 516Q94 510 96 536M118 524Q134 514 144 538M112 430Q130 430 126 446M134 450Q150 440 154 462M344 400Q336 410 350 420M320 430Q310 440 324 450M310 460Q300 474 316 478M396 380Q404 400 410 390M412 450Q390 450 396 470M390 486Q388 500 404 500M350 506Q360 492 374 514M296 566Q306 556 316 570M220 520Q228 500 230 530M230 536M258 560Q246 570 256 580M256 600Q262 612 272 600M140 580Q160 580 156 590M286 300Q300 310 314 300M330 286Q344 290 340 300",
      "M172 346L276 320L270 340Q276 364 258 368L240 370Q232 366 228 350L214 352Q216 376 204 380L190 384Q182 382 178 366ZM186 352L210 346Q212 370 200 374L192 374ZM236 342L262 334Q268 356 256 360L242 362ZM232 398Q234 386 248 386Q246 400 236 402Z",
      "M374 322Q404 326 440 308M386 286Q410 300 424 350M424 286Q396 320 400 352M374 300Q400 300 430 340",
      "M434 380L450 376L480 374Q476 350 470 344L476 336L540 314Q566 308 574 316Q574 330 556 350L464 420Q452 424 448 414L434 392ZM450 408L572 330M470 338Q480 366 500 362L540 340M492 336h4M510 332h4M530 326h4M488 346h4",
      "M616 420C620 386 664 386 674 416",
      "M438 470C430 440 456 436 470 440C490 456 476 474 446 496Q438 486 438 470Z",
      "M398 530Q396 520 406 518L600 484L612 480L608 498L612 540Q612 550 602 552L424 592Q412 594 408 584ZM426 536Q432 530 440 538L442 556Q436 562 430 556ZM422 556Q430 572 446 562M436 568v8M466 534L488 544L468 556ZM500 540L586 520M566 546L574 550L584 534M576 548L582 550L592 536",
      "M822 286L836 284L840 294L850 296L858 292L864 304L856 312L866 322L860 334L850 332L844 346L830 346L826 336L814 338L806 330L812 322L800 316L802 304L812 304L814 292Z",
      "M846 392L868 394L872 366L884 362L886 386L898 362L908 370L898 396L912 402L902 410L888 404L900 430L888 434L876 414L866 434L860 420L870 406L846 400Z",
      "M670 456Q674 450 682 456L732 476M670 456L676 474Q660 472 656 480L674 490Q652 492 658 500L676 502Q656 514 664 518L684 516Q676 530 682 532L726 510M736 470C742 456 770 456 774 472L772 484M722 484H778Q786 490 778 498H722Q716 490 722 484ZM736 472V484M726 500L706 604Q706 614 716 616L752 622Q762 622 762 612L770 500M718 552L766 556M714 582L764 588M738 542Q736 530 746 530Q754 534 752 544ZM734 578Q734 566 742 566Q750 570 746 580ZM724 520L768 524",
      "M790 440L814 436L810 456L830 462L824 490L818 470L796 468ZM834 516L848 488L854 472L904 470L910 482L924 490M834 516L846 580Q848 588 856 588L915 588M834 516L904 516L918 588M848 488H910L904 516M868 536Q884 552 876 562Q862 568 860 552Z",
      "M824 660C820 640 850 626 915 612M824 660C830 680 870 680 915 672M862 650C858 634 866 630 876 628L876 648L888 646Q886 624 898 620L896 640L908 640",
      "M0 6L46 4L92 40M0 120Q60 116 74 140Q60 156 0 158M0 160Q20 168 36 160M76 160C86 210 50 250 0 252M0 186Q16 180 34 190",
      "M0 504L30 502Q38 506 40 516L46 540L62 546L50 566L30 560L20 570L0 560M0 606Q40 600 62 626L72 604L70 626L80 634L58 638Q40 664 0 664",
    ],
  },
  {
    at: [280, 460],
    stars: [[106, 102, 28], [80, 275, 36], [592, 92, 23], [642, 168, 23], [678, 310, 22], [828, 500, 23]],
    sparks: [[342, 62, 21], [273, 384, 23], [607, 503, 19]],
    dots: [[21, 64, 6], [62, 100, 6], [37, 106, 12], [56, 128, 6], [159, 96, 5], [175, 108, 7], [320, 118, 6], [361, 117, 7], [350, 141, 4], [340, 187, 9], [325, 154, 4], [418, 66, 3], [469, 93, 10], [503, 95, 12], [542, 85, 8], [518, 127, 6], [482, 129, 4], [545, 111, 3], [640, 67, 6], [647, 96, 11], [627, 127, 6], [700, 18, 11], [764, 48, 9], [772, 96, 7], [730, 3, 6], [760, 9, 6], [902, 60, 8], [773, 138, 8], [870, 161, 9], [884, 207, 6], [918, 243, 11], [884, 275, 7], [884, 352, 6], [624, 218, 8], [601, 230, 4], [599, 259, 6], [634, 257, 13], [624, 317, 6], [646, 336, 5], [750, 318, 11], [395, 293, 6], [187, 273, 6], [142, 293, 6], [163, 309, 5], [198, 305, 9], [64, 212, 5], [27, 232, 9], [32, 294, 6], [4, 270, 5], [309, 358, 6], [334, 360, 6], [230, 400, 6], [243, 429, 7], [267, 458, 12], [54, 426, 11], [61, 462, 6], [96, 499, 6], [134, 497, 6], [108, 528, 11], [249, 547, 9], [182, 563, 6], [266, 512, 5], [529, 479, 6], [562, 470, 11], [622, 428, 5], [628, 453, 7], [651, 447, 6], [673, 441, 5], [697, 458, 9], [733, 444, 12], [718, 479, 5], [656, 486, 7], [731, 510, 7], [777, 482, 8], [608, 555, 5], [602, 585, 8], [627, 592, 5], [655, 598, 9], [587, 608, 4], [814, 578, 7], [856, 602, 8], [892, 607, 6], [734, 611, 8], [451, 553, 15], [510, 574, 15], [527, 529, 6], [547, 521, 6], [536, 551, 6], [554, 542, 6], [337, 564, 8], [344, 604, 4], [705, 80, 35], [62, 43, 11], [279, 282, 38], [289, 271, 10]],
    paths: [
      "M56 20L68 18L72 28L84 28L88 40L80 46L86 56L76 64L66 60L60 68L50 64L46 56L38 52L40 40L36 32L48 28Z",
      "M116 40C114 24 134 18 144 22M138 60C142 10 206 10 208 62ZM162 -4C164 20 190 20 192 -4M206 26C226 20 238 36 234 52L212 46M266 10L272 36Q274 42 282 40L352 26Q358 24 358 16M290 8C300 28 326 26 332 4",
      "M426 40C444 28 436 10 450 0M426 40Q460 56 500 58L504 0M456 54Q460 66 472 60M528 14Q540 4 560 14Q600 0 670 8L674 16Q640 24 600 20M534 26Q550 22 560 30L590 34L640 32L668 24Q664 46 640 48L560 52Q536 48 534 26Z",
      "M90 200C90 160 120 142 156 146C186 146 202 166 200 190C196 220 160 236 128 238C104 236 92 220 90 200ZM122 196C126 160 176 160 180 180C176 212 124 226 122 196ZM122 196L92 200M134 216L120 234M164 210L176 226M180 182L200 184M160 166L168 148M134 170L124 152M94 174L74 182Q72 190 90 190M140 144L142 128Q150 122 154 144M190 158L208 134Q222 132 220 146L200 172M200 194Q220 200 214 210Q200 212 196 206M134 238L134 258Q142 268 148 256L150 236",
      "M248 152C240 130 262 90 246 68M230 68C226 100 236 116 250 118C266 100 272 80 256 60ZM256 112C250 84 280 70 298 88C296 112 280 122 256 118M228 172C222 140 240 130 256 142C280 128 306 146 296 176C290 202 270 210 256 206C240 206 228 190 228 172ZM248 152L252 170",
      "M210 250Q208 240 216 236L340 208Q350 206 354 216L374 292Q374 302 366 306L354 316L360 346L336 334L248 352Q236 354 232 344ZM254 280Q264 266 272 280M262 300L300 288Q306 308 286 316Q266 318 262 300ZM270 300V312M282 296V314M294 294V308M332 306L340 310L350 292M344 308L356 290",
      "M372 140Q366 128 374 124Q372 112 384 110Q382 96 396 94L424 96C450 98 470 140 470 180Q468 196 452 204L436 212L378 222Q368 220 368 206ZM424 96C450 120 456 170 456 200M386 154L398 158L388 164M428 146L418 152L430 156M402 182L426 178Q428 192 412 198Q402 196 402 182ZM416 216L418 240Q426 254 436 246L436 214",
      "M494 162C510 156 520 160 540 150C580 140 600 150 600 170C600 200 576 196 574 220L572 250Q560 280 540 262C520 240 510 240 490 230C480 216 496 210 504 190Z",
      "M398 248Q406 266 396 272Q384 274 386 260ZM460 244Q476 256 474 268Q462 276 460 262ZM498 254Q516 264 514 274Q504 282 498 270ZM660 128Q670 116 682 130Q670 142 660 128ZM724 140Q736 128 748 140Q736 150 724 140Z",
      "M696 60L712 104L708 92L722 98M696 60L690 88L702 82M798 30L846 40Q880 44 874 70Q870 90 850 100Q830 110 808 104ZM820 56L870 100M836 56L840 74M822 76L844 78M858 90L866 102",
      "M676 184C674 170 690 172 690 164C676 156 688 144 696 142L710 156L724 152Q730 160 722 166C746 158 756 172 750 186C770 184 774 206 760 214L668 222C656 210 672 200 680 196M664 226L690 242L698 236L706 242L714 228L724 232L732 222L742 222L768 200L768 270Q750 290 720 294Q702 280 664 230M680 198C700 200 740 176 748 184M684 176C700 180 716 164 722 166",
      "M808 142Q810 130 824 134L826 146L844 162L862 254L822 266L812 260L796 164Q798 152 808 150ZM820 262L860 250M828 184Q844 206 836 216Q820 222 816 204ZM868 112L915 98M868 112L890 130L904 176L930 170",
      "M422 330C418 306 438 304 448 316C466 300 488 298 508 304C516 286 534 286 534 310C546 340 534 370 510 384C480 396 440 390 432 364Q424 346 422 330ZM452 338A10 10 0 1 0 472 338M492 328A10 10 0 1 0 512 328M478 342L490 344L484 350L494 354L474 352M446 358h8M520 346h6M472 394C480 420 490 430 490 438Q480 456 492 454L520 446Q530 442 522 436L514 424L520 412C540 416 556 410 562 410L566 422Q550 430 562 438L590 434C600 420 602 380 596 366C580 340 596 320 590 300Q578 290 572 306C570 326 590 350 540 350M520 412Q526 402 530 400M560 396L576 404L580 430",
      "M72 340Q72 328 84 328L194 328Q206 330 206 342V418Q206 432 194 432H130L100 458L94 434L84 432Q72 430 74 418ZM96 354H106V372H116V354H126V402H116V382H106V402H96ZM136 370H150V402H136ZM136 356H150V362H136Z",
      "M192 498C170 480 160 458 174 448Q184 444 192 454C202 440 220 448 216 464C212 480 200 488 192 498C212 470 240 470 242 490C244 514 216 514 192 498L204 538Q190 544 190 530L192 498L152 540M192 498C168 474 146 482 148 498C152 516 174 514 192 498M192 498C210 524 222 530 226 520",
      "M304 500C286 460 290 420 296 406Q308 402 308 410M312 396C324 380 348 390 366 420L376 442M312 396C310 420 330 450 346 456C352 440 340 410 320 398M376 442C384 410 370 396 374 370Q384 358 390 376L394 426M390 440L404 382Q420 370 420 388L402 434M400 440L426 410Q438 406 436 418C420 440 390 470 360 500M304 502Q296 512 298 528L304 530L362 536L368 508Q366 500 356 502L308 498",
      "M366 584C366 560 396 520 410 490C420 466 450 462 474 476L512 500L556 494Q580 500 580 520L572 630M366 584C376 606 400 604 420 594C450 580 460 574 480 586Q500 594 510 630M424 630C420 600 450 588 474 604M446 488Q460 484 460 498L472 500Q478 514 462 514L462 526Q448 532 446 518L430 518Q424 506 442 502ZM488 540L498 516Q506 514 502 522L494 544ZM444 620Q456 606 462 620",
      "M666 512C668 496 700 498 704 516L704 560Q686 580 668 560ZM652 546C650 590 680 586 690 586C716 584 726 564 722 546M688 588L696 612Q704 614 704 606L700 586M756 540L776 516L772 540L786 542L772 584L768 556L754 556Z",
      "M638 362Q636 352 646 352L712 350L732 346L726 366V404Q726 414 716 414L650 418Q640 418 640 408ZM656 372L706 368Q712 374 706 378L656 382Q648 378 656 372ZM658 392L694 388M748 382C744 366 762 364 768 372C772 350 796 352 796 366C796 380 780 390 772 398Q756 392 748 382ZM786 436C804 424 800 404 820 396Q850 396 852 416L848 462ZM832 396A9 9 0 1 1 850 398M810 450Q812 460 822 456M800 286Q814 306 806 318Q794 324 788 312ZM850 282Q874 300 876 316Q866 334 852 320ZM834 330Q850 350 844 360Q830 366 824 354ZM902 296Q900 280 915 288M902 296Q904 312 930 328",
      "M864 552L876 392Q880 380 892 380L930 382M878 538L888 408Q890 400 900 400L930 402M830 554L930 564M830 554Q828 576 846 582L930 590",
      "M0 460L26 460Q32 466 26 474L18 478V500Q14 510 0 506M24 564L44 500Q56 490 68 502L88 556Q84 568 74 560L70 548L44 550L40 566Q30 572 24 564ZM56 516L50 536H66ZM0 136L24 140L28 152L46 150L42 182L28 178L24 186L0 186",
      "M164 604Q160 594 170 592L300 566Q314 564 318 574L326 630M164 604L170 630M182 612L200 606L208 630M218 606L232 600L240 630M246 604v4M252 620v4M262 596L276 592L280 606L266 612L270 626L284 622M288 590L300 588L306 620M126 576Q132 570 152 592Q144 596 126 576ZM124 598L144 602M120 616L144 612",
    ],
  },
];

const ring = (x, y, r) => `M${x - r} ${y}a${r} ${r} 0 1 0 ${2 * r} 0a${r} ${r} 0 1 0 ${-2 * r} 0Z`;

const Wallpaper = () => (
  <svg className="[grid-area:1/1]" width="1009" height="730" viewBox="0 0 1009 730" fill="none" aria-hidden="true">
    <defs>
      <g id="tile" stroke="#171f26" strokeWidth="3.600" strokeLinecap="round" strokeLinejoin="round">
        {DOODLES.map((g, i) => (
          <g key={i} transform={`translate(${g.at[0]} ${g.at[1]}) scale(.33333)`}>
            <path d={g.stars.map((s) => starPath(...s)).join("")} />
            <path d={g.sparks.map((s) => sparkPath(...s)).join("")} />
            <path d={g.dots.map((s) => ring(...s)).join("")} />
            {g.paths.map((d, k) => (
              <path key={k} d={d} />
            ))}
          </g>
        ))}
      </g>
      <clipPath id="tileClip">
        <rect x="0" y="0" width="541" height="730" />
      </clipPath>
    </defs>
    <g clipPath="url(#tileClip)">
      <use href="#tile" />
    </g>
    <g transform="translate(540.300 0)">
      <g clipPath="url(#tileClip)">
        <use href="#tile" />
      </g>
    </g>
  </svg>
);

/* ---------- emoji ---------- */

const Emoji = ({ children, className = "" }) => (
  <svg className={`block h-5 w-5 shrink-0 ${className}`} viewBox="0 0 20 20" aria-hidden="true">
    {children}
  </svg>
);

const Calendar = () => (
  <Emoji>
    <rect x=".5" y=".5" width="19" height="19" fill="#e9edf0" />
    <rect x=".5" y=".5" width="19" height="6.500" fill="#4a83dc" />
    <circle cx="3" cy="1.800" r=".9" fill="#274f96" />
    <circle cx="17" cy="1.800" r=".9" fill="#274f96" />
    <text x="10" y="6" textAnchor="middle" fontSize="5" fontWeight="700" fill="#cfe2ff" fontFamily="Liberation Sans, sans-serif">FEB</text>
    <text x="10" y="17.800" textAnchor="middle" fontSize="12.500" fontWeight="700" fill="#3b3f43" fontFamily="Liberation Sans, sans-serif">24</text>
    <path d="M.5 19.300h19" stroke="#b9c0c6" strokeWidth=".6" />
  </Emoji>
);

const Check = () => (
  <Emoji>
    <defs>
      <linearGradient id="ck" x1="0" y1="0" x2="0" y2="1">
        <stop offset="0" stopColor="#63cfae" />
        <stop offset="1" stopColor="#1f8f68" />
      </linearGradient>
    </defs>
    <rect x=".6" y=".8" width="18.800" height="18.400" rx="4.500" fill="url(#ck)" />
    <path d="M3 2.200Q10 .8 17 2.200" stroke="#a6ead4" strokeWidth="1" fill="none" />
    <path d="M4.300 10.200L8.200 14.200L15.700 6" stroke="#fff" strokeWidth="2.600" fill="none" strokeLinecap="round" strokeLinejoin="round" />
  </Emoji>
);

const Warning = () => (
  <Emoji>
    <path d="M10 1.500L19 17.800H1Z" fill="#fcd22b" stroke="#a98a1c" strokeWidth="1.200" strokeLinejoin="round" />
    <path d="M1 18.300h18" stroke="#8a8250" strokeWidth=".8" />
    <path d="M9 6.500h2l-.4 6h-1.200z" fill="#2b2b2b" stroke="#2b2b2b" strokeWidth=".7" />
    <circle cx="10" cy="15.200" r="1.250" fill="#2b2b2b" />
  </Emoji>
);

const Stethoscope = () => (
  <Emoji>
    <path d="M8.500 1.200C4.800 1.800 5 6 7 8.300Q9 10.300 11.500 9.300Q15 7 13.500 2L11.500 .9" fill="none" stroke="#5f7f88" strokeWidth="1.200" />
    <path d="M11.500 9.500Q15.800 11 15.700 14Q15.200 17.200 12 16.600Q9.500 15.500 7.500 15.800" fill="none" stroke="#bd2f3b" strokeWidth="1.700" strokeLinecap="round" />
    <circle cx="5.600" cy="16" r="1.900" fill="#d5dadd" stroke="#7c878d" strokeWidth=".8" />
  </Emoji>
);

const Doctor = () => (
  <Emoji>
    <path d="M1.500 20Q2 15.800 6 15.300L10 14.500L14 15.300Q18 15.800 18.500 20Z" fill="#eef0f2" />
    <path d="M7.500 14.500L10 19L12.500 14.500Z" fill="#d9434b" />
    <path d="M2.500 14.500l2.500 1v4h-2.500z" fill="#f0a33a" />
    <path d="M14.500 16v3h2" stroke="#c23b46" strokeWidth="1" fill="none" />
    <ellipse cx="10" cy="8.700" rx="5.200" ry="6.200" fill="#fdc937" />
    <path d="M4.300 8.500C3.600 3 6.500 .8 10 .8S16.400 3 15.700 8.500L14.200 5.700Q10 6.500 5.800 5.700Z" fill="#f2a91e" />
    <circle cx="7.900" cy="8.800" r=".75" fill="#4b3418" />
    <circle cx="12.100" cy="8.800" r=".75" fill="#4b3418" />
    <path d="M7.800 11.700Q10 13.400 12.200 11.700" stroke="#8b5a17" strokeWidth=".8" fill="none" />
  </Emoji>
);

const Hospital = () => (
  <Emoji>
    <rect x="2" y="0" width="15.500" height="19" fill="#dfe4e8" />
    <path d="M4.700 1.500v5.600M1.900 4.300h5.600" stroke="#dc2330" strokeWidth="2.100" />
    <path d="M9.500 2.500h7M9.500 5h7M9.500 7.500h7" stroke="#4aa5cf" strokeWidth="1.600" strokeDasharray="1.800 .7" />
    <rect x="3.500" y="9.500" width="15.500" height="8" fill="#5c7e8d" />
    <path d="M4 11.500h14.500M4 14h14.500" stroke="#a6d8ea" strokeWidth="1.300" strokeDasharray="1.500 .7" />
    <path d="M1 17.200h18v1.300H1z" fill="#39515c" />
    <path d="M3 18.500h5v1.500H3zM13 18.500h4v1.500h-4z" fill="#7d4a4b" />
    <path d="M8 18.500h5v1.500H8z" fill="#c9d1d6" />
  </Emoji>
);

const Memo = () => (
  <Emoji>
    <path d="M.7 1h15.600v14.500l-3 4H.7z" fill="#f3cde3" />
    <path d="M3 5h9M3 8h6M3 14h8" stroke="#d29abd" strokeWidth=".7" />
    <path d="M13.300 19.500l3-4h-3z" fill="#c996b4" />
    <path d="M6.500 15L8 10.800L15.800 3.400L18.500 6L10.800 13.500Z" fill="#f59a1f" />
    <path d="M6.500 15L8 10.800L10.800 13.500Z" fill="#f1d3a2" />
    <path d="M15 4.200l1.600-1.500Q18.500 1.600 19.400 3.500L19.300 5.200L17.700 6.800Z" fill="#dc4858" />
    <path d="M6.500 15l.7-1.700 1 1z" fill="#333" />
  </Emoji>
);

const Person = () => (
  <Emoji>
    <defs>
      <linearGradient id="ps" x1="0" y1="0" x2="0" y2="1">
        <stop offset="0" stopColor="#7f97c4" />
        <stop offset="1" stopColor="#34507f" />
      </linearGradient>
    </defs>
    <path d="M10 .8C6 .8 4.600 3.500 4.700 6.800C4.800 9.300 6 11.500 7.700 13L7.500 14.500Q2.800 15.800 2.500 19.500H17.500Q17.200 15.800 12.500 14.500L12.300 13C14 11.500 15.200 9.300 15.300 6.800C15.400 3.500 14 .8 10 .8Z" fill="url(#ps)" />
  </Emoji>
);

const Pencil = () => (
  <Emoji>
    <path d="M.8 19L2.800 13L13.800 2.600L17.300 6L6.500 16.800Z" fill="#fb9716" />
    <path d="M4.800 15L15.500 4.500" stroke="#ffbe55" strokeWidth="1.400" />
    <path d="M.8 19L2.800 13L6.500 16.800Z" fill="#f3dab0" />
    <path d="M.8 19L1.600 16.800L3 18.200Z" fill="#333" />
    <path d="M13.200 3.200L14.700 1.800L18.200 5.100L16.700 6.600Z" fill="#c8ced3" />
    <path d="M14.700 1.800Q16.800-.3 18.700 1.200Q20.200 3 18.200 5.100Z" fill="#e2606c" />
  </Emoji>
);

const Info = () => (
  <Emoji>
    <defs>
      <linearGradient id="inf" x1="0" y1="0" x2="0" y2="1">
        <stop offset="0" stopColor="#9caed4" />
        <stop offset="1" stopColor="#4b5f93" />
      </linearGradient>
    </defs>
    <rect x=".6" y=".6" width="18.800" height="18.800" rx="4.500" fill="url(#inf)" />
    <circle cx="10" cy="5" r="1.500" fill="#fff" />
    <path d="M8.700 8H11.300V16H8.700Z" fill="#fff" />
  </Emoji>
);

/* ---------- text ---------- */

// Spreads its letters so that the run is exactly `w` pixels wide.
const T = ({ w, b, className = "", children }) => {
  const ref = useRef(null);
  useLayoutEffect(() => {
    const el = ref.current;
    el.style.letterSpacing = "0px";
    const natural = el.getBoundingClientRect().width;
    el.style.letterSpacing = `${(w - natural) / children.length}px`;
  }, [w, children]);
  return (
    <span ref={ref} className={`shrink-0 whitespace-pre ${b ? "font-bold" : ""} ${className}`}>
      {children}
    </span>
  );
};

const Row = ({ className = "", children }) => <div className={`flex h-5 items-center gap-1 ${className}`}>{children}</div>;
const Gap = () => <div className="h-[19px]" />;

const Field = ({ icon, label, lw, value, vw, link, className }) => (
  <Row className={className}>
    {icon}
    <T b w={lw}>{label}</T>
    <T w={vw} className={link ? "text-[#21c063]" : ""}>{value}</T>
  </Row>
);

const Ticks = () => (
  <svg className="block" width="16" height="11" viewBox="0 0 16 11" fill="none" stroke="#8bb5ab" strokeWidth="1.150" aria-hidden="true">
    <path d="M.8 5.800L4 9.300L11 1.200M7.200 8.200L8.300 9.300L15.200 1.200" />
  </svg>
);

const Out = ({ time, tail = true, className, children }) => (
  <div className={`relative shrink-0 self-end rounded-[7.5px] bg-[#005c4b] py-1.5 pl-[9px] ${tail ? "rounded-tr-none" : ""} ${className}`}>
    {tail && (
      <svg className="absolute -right-[7px] top-0" width="8" height="13" viewBox="0 0 8 13" aria-hidden="true">
        <path d="M0 0H6.200Q7.800 .2 7 1.600L1 10V13H0Z" fill="#005c4b" />
      </svg>
    )}
    {children}
    <div className="absolute bottom-[2px] right-[7px] flex h-[15px] items-center gap-[3px] text-[10.8px] text-[#8db8ad]">
      <T w={49.5}>{time}</T>
      <Ticks />
    </div>
  </div>
);

const In = ({ time, text, tw, className }) => (
  <div className={`relative flex h-[33px] shrink-0 items-center self-start rounded-[7.5px] rounded-tl-none bg-[#1f2c33] pl-[9px] ${className}`}>
    <svg className="absolute -left-[7px] top-0" width="8" height="13" viewBox="0 0 8 13" aria-hidden="true">
      <path d="M8 0H1.600Q-.2 .2 .8 1.600L7 10V13H8Z" fill="#1f2c33" />
    </svg>
    <T w={tw}>{text}</T>
    <div className="absolute bottom-[2px] right-[7px] flex h-[15px] items-center text-[10.8px] text-[#98a1a5]">
      <T w={49.5}>{time}</T>
    </div>
  </div>
);

export default function App() {
  return (
    <div className="grid h-[730px] w-[1009px] overflow-hidden bg-[#0b1219] font-['Noto_Sans','Open_Sans',sans-serif] text-[13.6px] leading-5 text-[#e4ebe9]">
      <Wallpaper />
      <main className="relative flex h-[730px] flex-col overflow-hidden pl-[58px] pr-[33px] [grid-area:1/1]">
        <Out time="10:08 a.m." tail={false} className="-mt-[21px] h-[133px] w-[370px]">
          <Field icon={<Hospital />} label="Especialidad:" lw={86} value="Optometra" vw={70} />
          <Field icon={<Calendar />} label="Fecha:" lw={42} value="2025-05-22" vw={73} link />
          <Row>
            <Check />
            <T w={73.5}>Confirmada</T>
          </Row>
          <Gap />
          <Row>
            <Warning />
            <T w={213}>¿Deseas cancelar una cita? Escribe</T>
            <T b w={86}>cancelar cita.</T>
          </Row>
          <Row>
            <Stethoscope />
            <T w={220.5}>¿Deseas consultar otra cita? Escribe</T>
            <T b w={29.5}>Cita.</T>
          </Row>
        </Out>

        <In text="Cancelar cita" tw={80} time="10:09 a.m." className="mt-3 w-[153px]" />

        <Out time="10:09 a.m." className="mt-3 h-[180px] w-[391px]">
          <Row>
            <Warning />
            <T w={297}>¿Cuál de tus citas confirmadas deseas cancelar?</T>
          </Row>
          <Gap />
          <Row className="mb-1 mt-1 pl-[6px]">
            <T w={11}>1.</T>
            <Doctor />
            <T b w={53.5} className="ml-px">Médico:</T>
            <T w={62.5}>Dr Kamilo</T>
          </Row>
          <Field icon={<Hospital />} label="Especialidad:" lw={85.5} value="Optometra" vw={69.5} className="pl-3" />
          <Field icon={<Calendar />} label="Fecha:" lw={42} value="2025-05-22" vw={73} link className="pl-3" />
          <Gap />
          <Row>
            <Pencil />
            <T w={304.5}>Escribe el número de la cita que deseas cancelar.</T>
          </Row>
          <Row>
            <Info />
            <T w={210}>Para salir de este proceso, escribe</T>
            <T b w={61}>terminar.</T>
          </Row>
        </Out>

        <In text="1" tw={8} time="10:10 a.m." className="mt-3 w-[81px]" />

        <Out time="10:10 a.m." className="mt-3 h-[211px] w-[381px]">
          <Row>
            <Warning />
            <T b w={212}>Cita seleccionada para cancelar:</T>
          </Row>
          <Gap />
          <Field icon={<Memo />} label="Documento:" lw={82} value="CC 123456" vw={67.5} />
          <Field icon={<Person />} label="Paciente:" lw={60} value="Jesus Andres" vw={81} />
          <Field icon={<Doctor />} label="Médico:" lw={53.5} value="Dr Kamilo" vw={62} />
          <Field icon={<Hospital />} label="Especialidad:" lw={85.5} value="Optometra" vw={69.5} />
          <Field icon={<Calendar />} label="Fecha:" lw={41.5} value="2025-05-22" vw={73} link />
          <Gap />
          <Row className="-mb-px">
            <T w={313.5}>¿Estás seguro de cancelar esta cita? Responde con</T>
            <T b w={11}>sí</T>
            <T w={8}>o</T>
            <T b w={20.5}>no.</T>
          </Row>
          <Row>
            <Info />
            <T w={137.5}>Si deseas salir, escribe</T>
            <T b w={61}>terminar.</T>
          </Row>
        </Out>

        <In text="Si" tw={11.5} time="10:11 a.m." className="mt-3 w-[84px]" />

        <Out time="10:11 a.m." className="mt-3 h-[53px] w-[597px]">
          <Row>
            <Check />
            <T w={90.5}>Tu cita ha sido</T>
            <div className="flex">
              <T b w={131}>cancelada con éxito</T>
              <T w={242.5}>. Si deseas hacer otra consulta, escribe:</T>
            </div>
            <T b w={29.5}>Cita.</T>
          </Row>
        </Out>

        <div className="mt-0.5 h-8 w-[333px] shrink-0 self-end rounded-tl-[7.5px] bg-[#005c4b]" />
        <div className="absolute -right-[25px] top-[710px] h-[42px] w-[42px] rounded-full bg-[#202c33]" />
      </main>
    </div>
  );
}
